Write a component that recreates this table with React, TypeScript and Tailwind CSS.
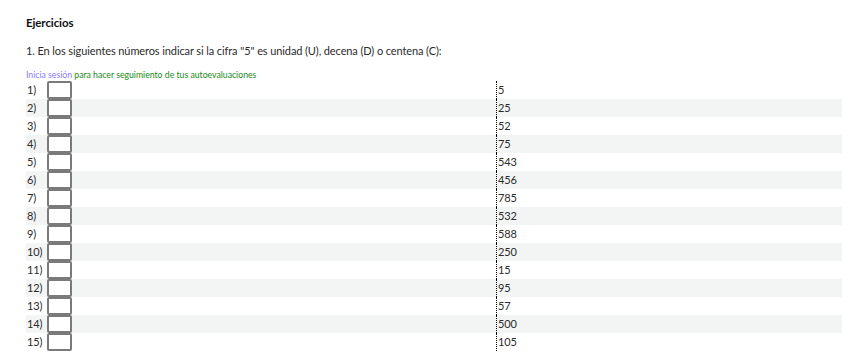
import React from 'react'

const numeros = ['5', '25', '52', '75', '543', '456', '785', '532', '588', '250', '15', '95', '57', '500', '105']

export default function App() {
  return (
    <div className="min-h-screen bg-white text-[#2b2b2b] font-['Lato',sans-serif] text-[11px] tracking-[-0.1px] leading-[18px]">
      <div className="pl-[26px] pr-[24px] pt-[14px]">
        <h3 className="font-bold text-[11.5px] leading-[18px] text-[#111]">Ejercicios</h3>
        <p className="mt-[10px]">
          1. En los siguientes números indicar si la cifra "5" es unidad (U), decena (D) o centena (C):
        </p>
        <p className="mt-[9px] text-[8.7px] leading-[12px] tracking-normal">
          <a className="text-[#8a7cff]">Inicia sesión</a>{' '}
          <span className="text-[#1a8a1a]">para hacer seguimiento de tus autoevaluaciones</span>
        </p>
        {/* tabla de ejercicios */}
        <div className="w-[816px]">
          {numeros.map((n, i) => (
            <div key={i} className={`flex h-[18px] ${i % 2 === 1 ? 'bg-[#f2f5f4]' : ''}`}>
              <div className="flex w-[470px] items-center">
                <span className="w-[21px] pl-[1px]">{i + 1})</span>
                <span className="h-[18px] w-[25px] rounded-[2px] border-2 border-[#7a7a7a] bg-white" />
              </div>
              <div className="flex-1 border-l border-dotted border-black pl-[1px]">{n}</div>
            </div>
          ))}
        </div>
      </div>
    </div>
  )
}
